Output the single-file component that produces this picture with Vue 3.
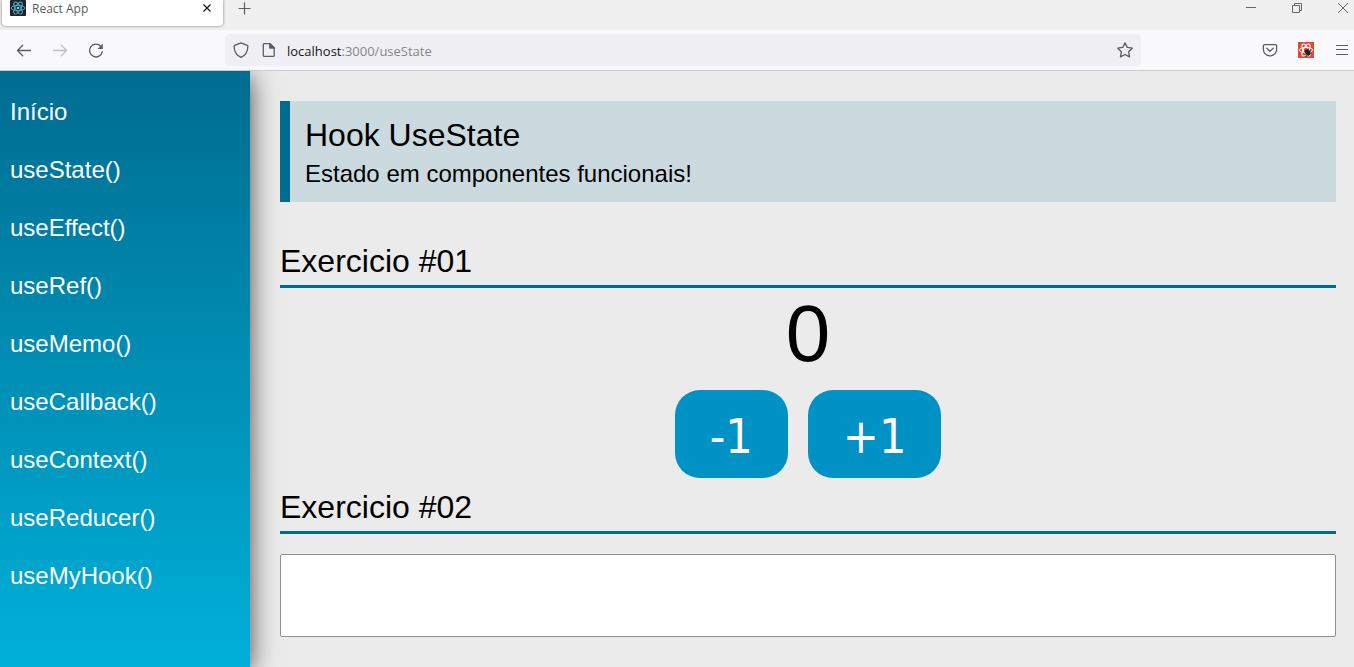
<script setup>
import { ref } from 'vue'

const links = [
  'Início',
  'useState()',
  'useEffect()',
  'useRef()',
  'useMemo()',
  'useCallback()',
  'useContext()',
  'useReducer()',
  'useMyHook()',
]
const count = ref(0)
const text = ref('')
</script>

<template>
  <div class="window">
    <header class="chrome">
      <div class="tabs">
        <div class="tab">
          <svg class="favicon" width="16" height="16" viewBox="0 0 16 16">
            <rect width="16" height="16" rx="1" fill="#20232a" />
            <g fill="none" stroke="#4fb3cf" stroke-width="0.9">
              <ellipse cx="8" cy="8" rx="6.8" ry="2.7" />
              <ellipse cx="8" cy="8" rx="6.8" ry="2.7" transform="rotate(60 8 8)" />
              <ellipse cx="8" cy="8" rx="6.8" ry="2.7" transform="rotate(120 8 8)" />
            </g>
            <circle cx="8" cy="8" r="1.3" fill="#61dafb" />
          </svg>
          <span class="tab-title">React App</span>
          <button class="icon" aria-label="Fechar aba">
            <svg width="16" height="16" viewBox="0 0 16 16" stroke="#15141a" stroke-width="1.2" fill="none">
              <path d="M4.500 4.500l7 7M11.500 4.500l-7 7" />
            </svg>
          </button>
        </div>
        <button class="icon new-tab" aria-label="Nova aba">
          <svg width="16" height="16" viewBox="0 0 16 16" stroke="#5b5b66" stroke-width="1.2" fill="none">
            <path d="M8.500 2.500v12M2.500 8.500h12" />
          </svg>
        </button>
        <div class="controls">
          <button class="icon" aria-label="Minimizar">
            <svg width="16" height="16" viewBox="0 0 16 16" stroke="#666" fill="none"><path d="M3 7.500h10" /></svg>
          </button>
          <button class="icon" aria-label="Restaurar">
            <svg width="16" height="16" viewBox="0 0 16 16" stroke="#666" fill="none">
              <path d="M3.500 5.500h7v7h-7zM5.500 5.500v-2h7v7h-2" />
            </svg>
          </button>
          <button class="icon" aria-label="Fechar">
            <svg width="16" height="16" viewBox="0 0 16 16" stroke="#666" fill="none"><path d="M3 3l10 10M13 3L3 13" /></svg>
          </button>
        </div>
      </div>
      <div class="toolbar">
        <div class="nav-buttons">
          <button class="icon" aria-label="Voltar">
            <svg width="16" height="16" viewBox="0 0 16 16" stroke="#5b5b66" stroke-width="1.3" fill="none" stroke-linecap="round" stroke-linejoin="round">
              <path d="M14.500 8.500H1.500M6.700 3.300L1.500 8.500 6.700 13.700" />
            </svg>
          </button>
          <button class="icon" aria-label="Avançar">
            <svg width="16" height="16" viewBox="0 0 16 16" stroke="#bdbdc4" stroke-width="1.3" fill="none" stroke-linecap="round" stroke-linejoin="round">
              <path d="M1.500 8.500h13M9.300 3.300l5.200 5.200L9.300 13.700" />
            </svg>
          </button>
          <button class="icon" aria-label="Recarregar">
            <svg width="16" height="16" viewBox="0 0 16 16" stroke="#5b5b66" stroke-width="1.3" fill="none" stroke-linecap="round">
              <path d="M14.300 9.700A6.400 6.400 0 1 1 12.700 4.200" />
              <path d="M14.800 1.700v5.200h-5.200z" fill="#5b5b66" stroke="none" />
            </svg>
          </button>
        </div>
        <div class="url-bar">
          <svg width="16" height="16" viewBox="0 0 16 16" stroke="#5b5b66" stroke-width="1.3" fill="none" stroke-linejoin="round">
            <path d="M8 .900L14.300 3.300C14.700 3.500 14.900 3.800 14.900 4.200C14.800 9.500 12.800 13.300 8 15.300C3.200 13.300 1.200 9.500 1.100 4.200C1.100 3.800 1.300 3.500 1.700 3.300Z" />
          </svg>
          <svg width="16" height="16" viewBox="0 0 16 16" stroke="#5b5b66" stroke-width="1.3" fill="none" stroke-linejoin="round">
            <path d="M4.300 1.600H10L14.200 5.800V13.400Q14.200 14.400 13.200 14.400H4.300Q3.300 14.400 3.300 13.400V2.600Q3.300 1.600 4.300 1.600Z" />
            <path d="M9.800 1.600V6H14.200Z" fill="#5b5b66" />
          </svg>
          <span class="url"><b>localhost</b>:3000/useState</span>
          <button class="icon" aria-label="Favoritar">
            <svg width="16" height="16" viewBox="0 0 16 16" stroke="#5b5b66" stroke-width="1.3" fill="none" stroke-linejoin="round">
              <path d="M8 .900L10.300 5.400L15.300 6.200L11.700 9.800L12.500 14.900L8 12.500L3.500 14.900L4.300 9.800L.700 6.200L5.700 5.400Z" />
            </svg>
          </button>
        </div>
        <div class="tools">
          <button class="icon" aria-label="Pocket">
            <svg width="16" height="16" viewBox="0 0 16 16" stroke="#5b5b66" stroke-width="1.300" fill="none" stroke-linecap="round" stroke-linejoin="round">
              <path d="M2.600 2.600H13.400Q14.600 2.600 14.600 3.800V7.500A6.600 6.400 0 0 1 1.400 7.500V3.800Q1.400 2.600 2.600 2.600ZM4.800 6.300L8 9.300L11.200 6.300" />
            </svg>
          </button>
          <button class="icon" aria-label="React Developer Tools">
            <svg width="16" height="16" viewBox="0 0 16 16" fill="none">
              <rect width="16" height="16" fill="#dd4b39" />
              <g stroke="#fff" stroke-width="1">
                <ellipse cx="8" cy="8" rx="6.600" ry="2.600" />
                <ellipse cx="8" cy="8" rx="6.600" ry="2.600" transform="rotate(60 8 8)" />
                <ellipse cx="8" cy="8" rx="6.600" ry="2.600" transform="rotate(120 8 8)" />
              </g>
              <ellipse cx="9.500" cy="10.500" rx="2.200" ry="3.400" transform="rotate(-35 9.500 10.500)" fill="#222" />
              <path d="M6 10l7-1M6.500 13l6-4M8.500 14.500l2-8M10 7l3 5" stroke="#222" stroke-width="0.800" />
            </svg>
          </button>
          <button class="icon" aria-label="Menu">
            <svg width="16" height="16" viewBox="0 0 16 16" stroke="#5b5b66" stroke-width="1.200" fill="none">
              <path d="M2 3.500h12M2 7.500h12M2 12.500h12" />
            </svg>
          </button>
        </div>
      </div>
    </header>

    <div class="page">
      <nav class="sidebar">
        <a v-for="link in links" :key="link" href="#">{{ link }}</a>
      </nav>
      <main class="content">
        <div class="page-title">
          <h1>Hook UseState</h1>
          <h2>Estado em componentes funcionais!</h2>
        </div>
        <h3 class="section-title">Exercicio #01</h3>
        <div class="center">
          <span class="count">{{ count }}</span>
          <div class="buttons">
            <button class="btn" @click="count--">-1</button>
            <button class="btn" @click="count++">+1</button>
          </div>
        </div>
        <h3 id="ex2" class="section-title">Exercicio #02</h3>
        <input v-model="text" class="input" type="text" aria-labelledby="ex2" />
      </main>
    </div>
  </div>
</template>

<style>
body {
  margin: 0;
}
</style>

<style scoped>
.window {
  display: flex;
  flex-direction: column;
  height: 100vh;
  overflow: hidden;
  background: #ebebeb;
  font-family: "Liberation Sans", Arial, sans-serif;
  color: #000;
}
.chrome {
  font-family: "Open Sans", "Noto Sans", sans-serif;
  border-bottom: 1px solid #ccc;
}
.icon {
  display: flex;
  padding: 0;
  border: 0;
  background: none;
}
svg {
  display: block;
  flex: none;
}
.tabs {
  display: flex;
  height: 30px;
  background: #f0f0f0;
}
.tab {
  box-sizing: border-box;
  display: flex;
  width: 221px;
  height: 26px;
  margin-left: 2px;
  padding: 0 8px 10px;
  align-items: center;
  background: #fff;
  border-radius: 0 0 4px 4px;
  box-shadow: 0 0 3px rgba(0, 0, 0, 0.5);
}
.tab-title {
  flex: 1;
  margin-left: 6px;
  padding-top: 2px;
  font-size: 12px;
  line-height: 16px;
  color: #5b5b66;
}
.new-tab {
  height: 16px;
  margin-left: 13px;
}
.controls {
  display: flex;
  height: 16px;
  margin-left: auto;
  margin-right: 3px;
  gap: 30px;
}
.toolbar {
  display: flex;
  height: 40px;
  align-items: center;
  background: #f9f9fb;
}
.nav-buttons {
  display: flex;
  width: 209px;
  padding-left: 16px;
  gap: 20px;
}
.url-bar {
  box-sizing: border-box;
  display: flex;
  flex: 1;
  height: 32px;
  padding: 0 8px;
  gap: 11px;
  align-items: center;
  background: #f0f0f4;
  border-radius: 4px;
}
.url {
  flex: 1;
  padding-top: 2px;
  font-size: 13px;
  line-height: 18px;
  color: #84848b;
}
.url b {
  font-weight: 400;
  color: #15141a;
}
.tools {
  display: flex;
  padding: 0 4px 0 121px;
  gap: 20px;
}
.page {
  display: flex;
  flex: 1;
  overflow: hidden;
}
.sidebar {
  box-sizing: border-box;
  display: flex;
  flex: none;
  flex-direction: column;
  width: 250px;
  padding: 27px 10px;
  gap: 30px;
  background: linear-gradient(#006c90, #00b0d9);
  box-shadow: 0 5px 25px rgba(0, 0, 0, 0.7);
}
.sidebar a {
  font-size: 24px;
  line-height: 28px;
  color: #fff;
  text-decoration: none;
}
.content {
  flex: 1;
  padding: 30px 18px 30px 30px;
}
h1,
h2,
h3 {
  margin: 0;
  font-weight: 400;
}
.page-title {
  display: flex;
  flex-direction: column;
  gap: 6px;
  margin-bottom: 40px;
  padding: 16px 15px 14px;
  border-left: 10px solid #006c90;
  background: #cbdadf;
}
h1,
h3 {
  font-size: 32px;
  line-height: 37px;
}
h2 {
  font-size: 24px;
  line-height: 28px;
}
.section-title {
  padding: 1px 0 5px;
  border-bottom: 3px solid #006c90;
}
.center {
  display: flex;
  flex-direction: column;
  align-items: center;
  gap: 10px;
  margin-bottom: 10px;
}
.count {
  font-size: 80px;
  line-height: 92px;
}
.buttons {
  display: flex;
  gap: 20px;
}
.btn {
  padding: 17px 35px 13px;
  border: 0;
  border-radius: 25px;
  background: #0092c5;
  color: #fff;
  font-family: Tahoma, "DejaVu Sans Condensed", "DejaVu Sans", sans-serif;
  font-size: 48px;
  line-height: 58px;
}
.input {
  box-sizing: border-box;
  display: block;
  width: 100%;
  height: 83px;
  margin-top: 20px;
  padding: 10px;
  border: 1px solid #8f8f9d;
  border-radius: 2px;
  background: #fff;
  font-family: inherit;
  font-size: 48px;
}
</style>
